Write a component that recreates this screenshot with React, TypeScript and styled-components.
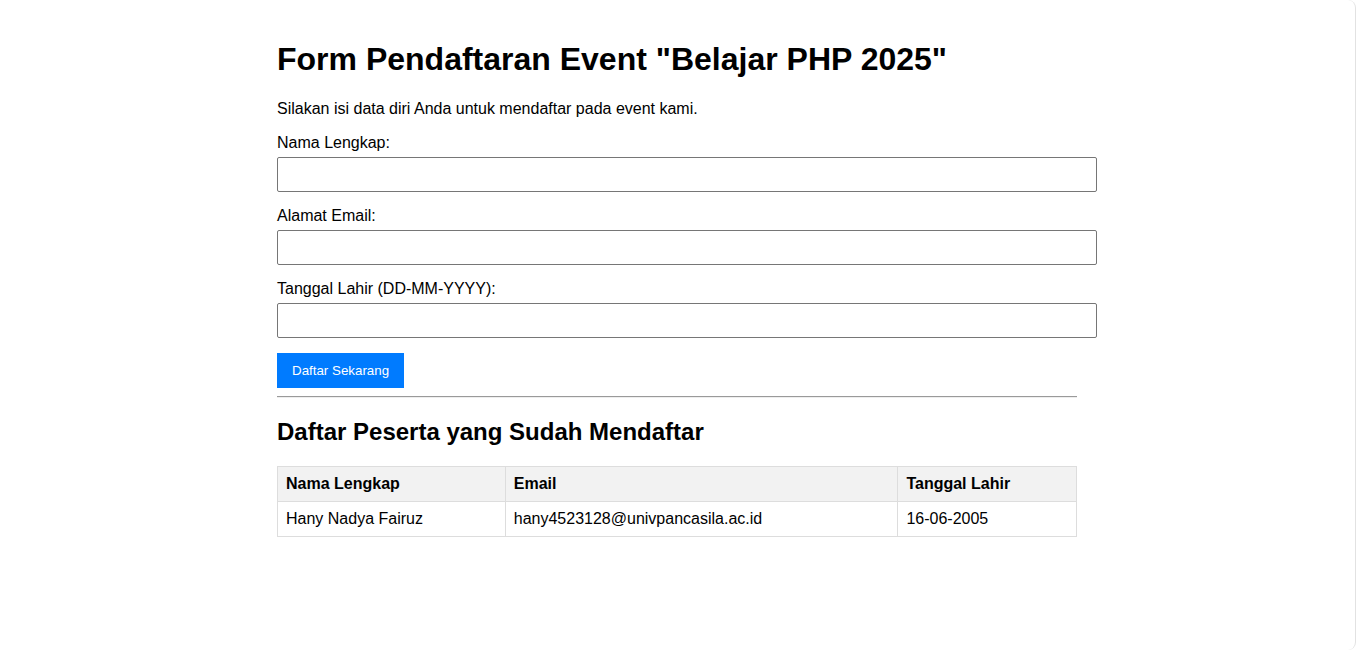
import React from "react";
import styled, { createGlobalStyle } from "styled-components";

const GlobalStyle = createGlobalStyle`
  html, body {
    margin: 0;
    padding: 0;
    background: #ffffff;
  }
  body {
    font-family: "Liberation Sans", Arial, sans-serif;
    color: #000;
  }
`;

const Frame = styled.div`
  width: 1356px;
  height: 650px;
  box-sizing: border-box;
  padding-right: 1px;
  border-right: 1px solid #e2e2e2;
  border-radius: 0 8px 8px 0;
  background: #fff;
  overflow: hidden;
`;

const Container = styled.div`
  width: 800px;
  margin: 0 auto;
  padding-top: 20px;
`;

const Title = styled.h1`
  font-size: 32px;
  font-weight: bold;
  margin: 21.44px 0;
`;

const Intro = styled.p`
  font-size: 16px;
  margin: 16px 0;
`;

const Label = styled.label`
  display: block;
  font-size: 16px;
  margin-bottom: 5px;
`;

const Input = styled.input`
  display: block;
  width: 100%;
  height: 17px;
  padding: 8px 9px;
  margin: 0 0 15px;
  border: 1px solid #767676;
  border-radius: 2px;
  font-family: inherit;
  font-size: 16px;
  background: #fff;
`;

const SubmitButton = styled.button`
  display: block;
  background: #007bff;
  color: #fff;
  border: none;
  padding: 10px 15px;
  font-family: "Liberation Sans", Arial, sans-serif;
  font-size: 13.33px;
  cursor: pointer;
`;

const Divider = styled.hr`
  margin: 8px 0;
  border: 0;
  border-top: 1px solid #9a9a9a;
  border-bottom: 1px solid #eeeeee;
`;

const SectionTitle = styled.h2`
  font-size: 24px;
  font-weight: bold;
  margin: 19.92px 0;
`;

const Table = styled.table`
  width: 100%;
  border-collapse: collapse;
  font-size: 16px;

  th,
  td {
    border: 1px solid #dddddd;
    padding: 8px;
    text-align: left;
  }

  th {
    background: #f2f2f2;
    font-weight: bold;
  }
`;

const fields = [
  { id: "nama", label: "Nama Lengkap:", type: "text" },
  { id: "email", label: "Alamat Email:", type: "email" },
  { id: "tgl", label: "Tanggal Lahir (DD-MM-YYYY):", type: "text" },
];

const peserta = [
  {
    nama: "Hany Nadya Fairuz",
    email: "hany4523128@univpancasila.ac.id",
    tgl: "16-06-2005",
  },
];

export default function App() {
  return (
    <>
      <GlobalStyle />
      <Frame>
        <Container>
          <Title>Form Pendaftaran Event "Belajar PHP 2025"</Title>
          <Intro>Silakan isi data diri Anda untuk mendaftar pada event kami.</Intro>
          <form onSubmit={(e) => e.preventDefault()}>
            {fields.map((f) => (
              <React.Fragment key={f.id}>
                <Label htmlFor={f.id}>{f.label}</Label>
                <Input id={f.id} name={f.id} type={f.type} />
              </React.Fragment>
            ))}
            <SubmitButton type="submit">Daftar Sekarang</SubmitButton>
          </form>
          <Divider />
          <SectionTitle>Daftar Peserta yang Sudah Mendaftar</SectionTitle>
          <Table>
            <thead>
              <tr>
                <th>Nama Lengkap</th>
                <th>Email</th>
                <th>Tanggal Lahir</th>
              </tr>
            </thead>
            <tbody>
              {peserta.map((p) => (
                <tr key={p.email}>
                  <td>{p.nama}</td>
                  <td>{p.email}</td>
                  <td>{p.tgl}</td>
                </tr>
              ))}
            </tbody>
          </Table>
        </Container>
      </Frame>
    </>
  );
}
